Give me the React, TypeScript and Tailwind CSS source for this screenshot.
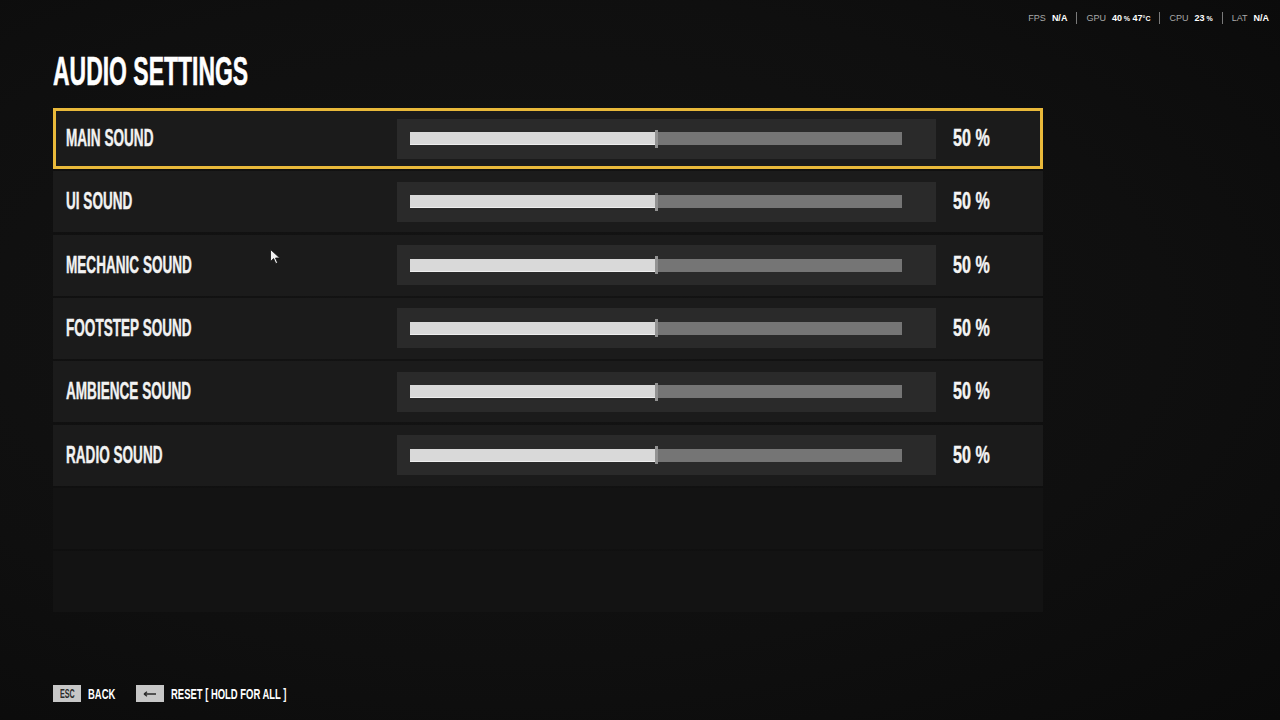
import { ReactNode } from "react";

const sounds = [
  { name: "MAIN SOUND", value: 50 },
  { name: "UI SOUND", value: 50 },
  { name: "MECHANIC SOUND", value: 50 },
  { name: "FOOTSTEP SOUND", value: 50 },
  { name: "AMBIENCE SOUND", value: 50 },
  { name: "RADIO SOUND", value: 50 },
];

const FONT = "font-['Liberation_Sans',Arial,sans-serif]";

// squeezes a bold sans into the narrow display face of the game
function Cond({ children, className }: { children: ReactNode; className: string }) {
  return (
    <span className={"inline-block origin-left whitespace-nowrap font-bold " + className}>
      {children}
    </span>
  );
}

function Stat({ label, children }: { label: string; children: ReactNode }) {
  return (
    <div className="flex items-center gap-[6px]">
      <span className="text-[#a9a9a9]">{label}</span>
      <span className="font-bold text-white">{children}</span>
    </div>
  );
}

function Sep() {
  return <div className="w-px h-[12px] bg-[#7a7a7a] mx-[9px]" />;
}

function SliderRow({ name, value, selected }: { name: string; value: number; selected: boolean }) {
  return (
    <div
      className={
        "flex items-center h-[61px] border-[3px] pl-[10px] bg-[#1b1b1b] " +
        (selected ? "border-[#e9b93a]" : "border-transparent")
      }
    >
      <div className="w-[331px] text-[23px] leading-none text-[#f2f2f2] [-webkit-text-stroke:0.4px_#f2f2f2]">
        <Cond className="scale-x-[0.59]">{name}</Cond>
      </div>
      <div className="flex items-center w-[539px] h-[40px] bg-[#2a2a2a] pl-[13px]">
        <div className="flex items-center w-[492px] h-[13px] bg-[#757575]">
          <div className="h-full bg-[#d9d9d9] border-b border-[#eeeeee]" style={{ width: `${value}%` }} />
          <div className="w-[3px] h-[18px] -ml-[1px] bg-[#929292]" />
        </div>
      </div>
      <div className="ml-[17px] text-[23px] leading-none text-[#f4f4f4] [-webkit-text-stroke:0.4px_#f4f4f4]">
        <Cond className="scale-x-[0.7]">{value} %</Cond>
      </div>
    </div>
  );
}

export default function App() {
  return (
    <div
      className={
        "relative w-[1280px] h-[720px] overflow-hidden flex flex-col bg-[radial-gradient(ellipse_at_40%_45%,#141414_0%,#0f0f0f_60%,#0a0a0a_100%)] " +
        FONT
      }
    >
      <div className="flex justify-end items-center h-[36px] pr-[11px] text-[9px] leading-none">
        <Stat label="FPS">N/A</Stat>
        <Sep />
        <Stat label="GPU">
          40<span className="text-[7px]"> %</span> 47<span className="text-[7px]">°C</span>
        </Stat>
        <Sep />
        <Stat label="CPU">
          23<span className="text-[7px]"> %</span>
        </Stat>
        <Sep />
        <Stat label="LAT">N/A</Stat>
      </div>

      <div className="flex flex-col pl-[53px] pt-[15px]">
        <h1 className="text-[41px] leading-none text-white h-[41px] [-webkit-text-stroke:0.6px_white]">
          <Cond className="scale-x-[0.56]">AUDIO SETTINGS</Cond>
        </h1>

        <div className="flex flex-col gap-[2.33px] w-[990px] mt-[16px]">
          {sounds.map((s, i) => (
            <SliderRow key={s.name} name={s.name} value={s.value} selected={i === 0} />
          ))}
          <div className="h-[61px] bg-[#131313]" />
          <div className="h-[61px] bg-[#131313]" />
        </div>
      </div>

      <div className="mt-auto flex items-center pl-[53px] pb-[18px] text-white">
        <div className="flex items-center justify-center w-[28px] h-[17px] bg-[#c7c7c7] text-[12px] leading-none text-[#2a2a2a]">
          <div className="w-[15px]">
            <Cond className="scale-x-[0.6]">ESC</Cond>
          </div>
        </div>
        <div className="w-[55px] pl-[7px] text-[15px] leading-none">
          <Cond className="scale-x-[0.63]">BACK</Cond>
        </div>
        <div className="flex items-center justify-center w-[28px] h-[17px] bg-[#c7c7c7]">
          <svg width="14" height="6" viewBox="0 0 14 6">
            <path d="M1 3 H13 M1 3 L4 0.8 M1 3 L4 5.2" stroke="#2a2a2a" strokeWidth="1.3" fill="none" />
          </svg>
        </div>
        <div className="pl-[7px] text-[15px] leading-none">
          <Cond className="scale-x-[0.63]">RESET [ HOLD FOR ALL ]</Cond>
        </div>
      </div>

      {/* mouse pointer left over the list */}
      <svg className="absolute left-[270px] top-[249px]" width="11" height="16" viewBox="0 0 11 16">
        <path d="M0.5 0.5 L0.5 12.5 L3.6 9.6 L5.8 14.6 L7.6 13.8 L5.5 9 L9.8 9 Z" fill="#f4f4f4" stroke="#111" strokeWidth="0.8" />
      </svg>
    </div>
  );
}
